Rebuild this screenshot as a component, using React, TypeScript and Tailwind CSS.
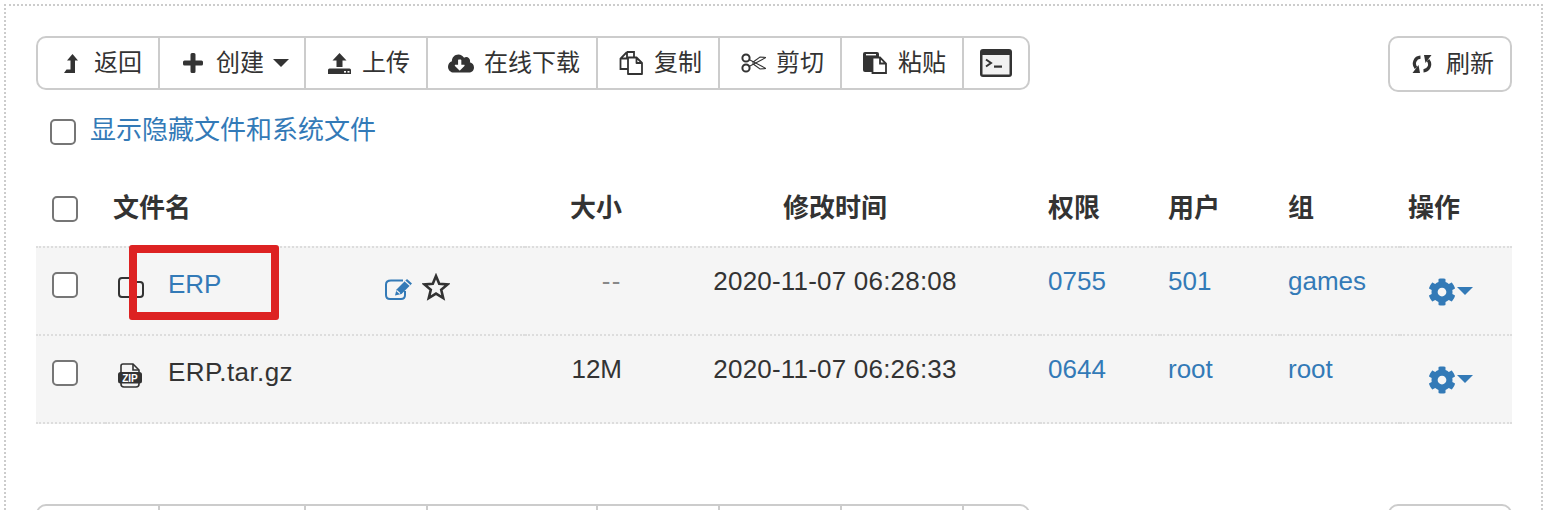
import { FaCloudDownloadAlt, FaCog } from "react-icons/fa";

const Check = ({ className = "" }: { className?: string }) => (
  <input
    type="checkbox"
    readOnly
    className={`block appearance-none w-[26px] h-[26px] shrink-0 rounded-[5px] border-2 border-[#767676] bg-white ${className}`}
  />
);

const Caret = ({ className = "" }: { className?: string }) => (
  <svg width="16" height="8" viewBox="0 0 16 8" className={className}>
    <path d="M0 0H16L8 8Z" fill="currentColor" />
  </svg>
);

const BackIcon = () => (
  <svg width="14" height="19" viewBox="0 0 14 19" fill="#333">
    <path d="M8.5 0L14 6.5H11V19H0L2.5 15.5H6.5V6.5H3Z" />
  </svg>
);

const PlusIcon = () => (
  <svg width="20" height="20" viewBox="0 0 20 20" fill="#333">
    <path d="M7.5 1.5Q7.5 0 9 0H11Q12.5 0 12.5 1.5V7.5H18.5Q20 7.5 20 9V11Q20 12.5 18.5 12.5H12.5V18.5Q12.5 20 11 20H9Q7.5 20 7.5 18.5V12.5H1.5Q0 12.5 0 11V9Q0 7.5 1.5 7.5H7.5Z" />
  </svg>
);

const UploadIcon = () => (
  <svg width="23" height="21" viewBox="0 0 23 21" fill="#333">
    <path d="M11.5 0L18.5 7.5H14.5V14H8.5V7.5H4.5Z" />
    <path d="M0 17Q0 15.5 1.5 15.5H21.5Q23 15.5 23 17V21H0Z" />
    <rect x="16" y="18" width="2" height="1.6" fill="#fff" />
    <rect x="19.5" y="18" width="2" height="1.6" fill="#fff" />
  </svg>
);

const CopyIcon = () => (
  <svg width="24" height="24" viewBox="0 0 24 24" fill="none" stroke="#333" strokeWidth="1.8">
    <path d="M8 1H15V6.5M8 1L1.5 7.5V18H9M8 1V7.5H1.5" />
    <path d="M9 6.5H17.5L23 12V23H9ZM17.5 6.5V12H23" strokeLinejoin="round" />
  </svg>
);

const ScissorsIcon = () => (
  <svg width="25" height="20" viewBox="0 0 25 20" fill="none" stroke="#333">
    <circle cx="5" cy="5" r="3.6" strokeWidth="2" />
    <circle cx="5" cy="15" r="3.6" strokeWidth="2" />
    <path d="M8 6.6L25 15.5L19 16L11.5 10.5" strokeWidth="1.1" />
    <path d="M8 13.4L25 4.5L19 4L11.5 9.5" strokeWidth="1.1" />
  </svg>
);

const PasteIcon = () => (
  <svg width="24" height="22" viewBox="0 0 24 22">
    <path d="M2 0H14Q16 0 16 2V20H2Q0 20 0 18V2Q0 0 2 0Z" fill="#333" />
    <rect x="3" y="2" width="10" height="1.4" fill="#fff" />
    <path d="M9.5 5.5H17L23 11.5V21H9.5Z M17 5.5V11.5H23" fill="#fff" stroke="#333" strokeWidth="1.8" />
  </svg>
);

const TerminalIcon = () => (
  <svg width="32" height="28" viewBox="0 0 32 28">
    <rect x="0" y="0" width="32" height="28" rx="3" fill="#333" />
    <rect x="2.5" y="6" width="27" height="19.5" fill="#f2f2f2" />
    <path d="M6 10.5L11 14L6 17.5" fill="none" stroke="#333" strokeWidth="2" />
    <rect x="14" y="16.5" width="8" height="2.2" fill="#333" />
  </svg>
);

const RefreshArc = () => (
  <>
    <path d="M8.5 2.2C3 2.5 0.5 8.5 4 13" fill="none" stroke="#333" strokeWidth="3.2" />
    <path d="M0.5 18L8 18L6.5 10Z" />
  </>
);

const RefreshIcon = () => (
  <svg width="20" height="18" viewBox="0 0 20 18" fill="#333" className="shrink-0">
    <RefreshArc />
    <g transform="rotate(180 10 9)">
      <RefreshArc />
    </g>
  </svg>
);

const FolderIcon = () => (
  <svg width="26" height="21" viewBox="0 0 26 21" fill="none" stroke="#333" strokeWidth="2">
    <path d="M4 1H12Q15 1 15 4V5H22Q25 5 25 8V17Q25 20 22 20H4Q1 20 1 17V4Q1 1 4 1Z" />
  </svg>
);

const ZipIcon = () => (
  <svg width="24" height="25" viewBox="0 0 24 25">
    <path d="M5 1H15L21 7V21Q21 24 18 24H6Q3 24 3 21V3Q3 1 5 1Z" fill="none" stroke="#333" strokeWidth="1.6" />
    <path d="M15 1V7H21" fill="none" stroke="#333" strokeWidth="1.6" />
    <rect x="0" y="9" width="24" height="11.5" rx="2.5" fill="#333" />
    <text x="12" y="18.6" textAnchor="middle" fontSize="10" fontWeight="700" fill="#fff" fontFamily="Liberation Sans">
      ZIP
    </text>
  </svg>
);

const EditIcon = () => (
  <svg width="28" height="22" viewBox="0 0 28 22" fill="none" stroke="#337ab7" strokeWidth="2">
    <path d="M18 2.5H6Q1 2.5 1 6.5V17Q1 21 5 21H16Q20 21 20 17V13" />
    <path d="M10 17.5L11.5 11.5L22 1L27 5.5L16.5 16Z" fill="#337ab7" stroke="none" />
    <path d="M20 3L25 7.5M11.5 12.5L15 15.5" stroke="#f5f5f5" strokeWidth="1.1" />
  </svg>
);

const StarIcon = () => (
  <svg width="28" height="28" viewBox="0 0 28 28" fill="none" stroke="#333" strokeWidth="2.6">
    <path d="M14 3L17.2 10.8L25.6 11.4L19.2 16.8L21.2 25L14 20.6L6.8 25L8.8 16.8L2.4 11.4L10.8 10.8Z" />
  </svg>
);

const TOOLS = [
  { label: "返回", icon: <BackIcon />, width: "w-[124px]" },
  { label: "创建", icon: <PlusIcon />, width: "w-[148px]", caret: true },
  { label: "上传", icon: <UploadIcon />, width: "w-[124px]" },
  { label: "在线下载", icon: <FaCloudDownloadAlt className="w-[26px] h-[21px]" />, width: "w-[172px]" },
  { label: "复制", icon: <CopyIcon />, width: "w-[124px]" },
  { label: "剪切", icon: <ScissorsIcon />, width: "w-[124px]" },
  { label: "粘贴", icon: <PasteIcon />, width: "w-[124px]" },
];

function Toolbar() {
  return (
    <div className="flex items-start justify-between">
      <div className="flex h-[54px]">
        {TOOLS.map((t, i) => (
          <div
            key={t.label}
            className={`${t.width} flex items-center shrink-0 gap-[10px] pl-[20px] border-2 border-[#ccc] bg-white text-[24px] ${
              i === 0 ? "rounded-l-[10px]" : "-ml-[2px]"
            }`}
          >
            <span className="w-[26px] flex justify-center text-[#333]">{t.icon}</span>
            <span className="pb-[2px]">{t.label}</span>
            {t.caret && <Caret className="-ml-[1px] text-[#333]" />}
          </div>
        ))}
        <div className="w-[68px] -ml-[2px] flex items-center justify-center border-2 border-[#ccc] rounded-r-[10px]">
          <TerminalIcon />
        </div>
      </div>
      <div className="w-[124px] h-[56px] flex items-center gap-[14px] pl-[22px] border-2 border-[#ccc] rounded-[10px] text-[24px]">
        <RefreshIcon />
        <span className="pb-[2px]">刷新</span>
      </div>
    </div>
  );
}

const ROWS = [
  {
    name: "ERP",
    icon: <FolderIcon />,
    iconTop: "mt-[29px]",
    nameClass: "text-[#337ab7]",
    actions: true,
    size: "--",
    sizeClass: "text-[#888] tracking-[1.5px]",
    time: "2020-11-07 06:28:08",
    perm: "0755",
    user: "501",
    group: "games",
  },
  {
    name: "ERP.tar.gz",
    icon: <ZipIcon />,
    iconTop: "mt-[27px]",
    nameClass: "tracking-[0.4px]",
    actions: false,
    size: "12M",
    sizeClass: "",
    time: "2020-11-07 06:26:33",
    perm: "0644",
    user: "root",
    group: "root",
  },
];

const HEAD_CELL = "h-[74px] align-top pt-[18px] font-bold";
const CELL = "h-[88px] align-top pt-[15px] border-t-2 border-dotted border-[#ddd] bg-[#f5f5f5] pl-[8px]";

export default function App() {
  return (
    <div
      className="relative h-[510px] w-[1564px] overflow-hidden bg-white text-[#333] pt-[4px] pl-[4px]"
      style={{ fontFamily: '"Liberation Sans","Noto Sans CJK SC",sans-serif' }}
    >
      <div className="w-[1539px] border-2 border-dotted border-[#ccc] pt-[30px] pl-[30px] pr-[29px] text-[26px] leading-[37px]">
        <Toolbar />

        <div className="flex items-start mt-[20px] pl-[14px] gap-[14px]">
          <Check className="mt-[7px]" />
          <a className="text-[#337ab7]">显示隐藏文件和系统文件</a>
        </div>

        <table className="mt-[23px] w-[1476px] table-fixed border-separate border-spacing-0">
          <colgroup>
            <col className="w-[69px]" />
            <col className="w-[420px]" />
            <col className="w-[105px]" />
            <col className="w-[410px]" />
            <col className="w-[120px]" />
            <col className="w-[120px]" />
            <col className="w-[120px]" />
            <col className="w-[112px]" />
          </colgroup>
          <thead>
            <tr>
              <th className={`${HEAD_CELL} text-left pl-[16px]`}>
                <Check className="mt-[6px]" />
              </th>
              <th className={`${HEAD_CELL} text-left pl-[8px]`}>文件名</th>
              <th className={`${HEAD_CELL} text-right pr-[8px]`}>大小</th>
              <th className={`${HEAD_CELL} text-center`}>修改时间</th>
              <th className={`${HEAD_CELL} text-left pl-[8px]`}>权限</th>
              <th className={`${HEAD_CELL} text-left pl-[8px]`}>用户</th>
              <th className={`${HEAD_CELL} text-left pl-[8px]`}>组</th>
              <th className={`${HEAD_CELL} text-left pl-[8px]`}>操作</th>
            </tr>
          </thead>
          <tbody>
            {ROWS.map((r, i) => {
              const last = i === ROWS.length - 1 ? "border-b-2 h-[90px]" : "";
              return (
                <tr key={r.name}>
                  <td className={`${CELL} ${last} !pl-[16px] !pt-[24px]`}>
                    <Check />
                  </td>
                  <td className={`${CELL} ${last} !pt-0 !pl-[13px]`}>
                    <div className="flex items-start">
                      <span className={`w-[26px] shrink-0 ${r.iconTop}`}>{r.icon}</span>
                      <span className={`w-[217px] shrink-0 ml-[24px] mt-[18px] ${r.nameClass}`}>{r.name}</span>
                      {r.actions && (
                        <>
                          <span className="mt-[30px]">
                            <EditIcon />
                          </span>
                          <span className="mt-[25px] ml-[9px]">
                            <StarIcon />
                          </span>
                        </>
                      )}
                    </div>
                  </td>
                  <td className={`${CELL} ${last} text-right !pl-0 pr-[8px] ${r.sizeClass}`}>{r.size}</td>
                  <td className={`${CELL} ${last} text-center !pl-0 tracking-[0.2px]`}>{r.time}</td>
                  <td className={`${CELL} ${last} text-[#337ab7]`}>{r.perm}</td>
                  <td className={`${CELL} ${last} text-[#337ab7]`}>{r.user}</td>
                  <td className={`${CELL} ${last} text-[#337ab7]`}>{r.group}</td>
                  <td className={`${CELL} ${last} !pt-[30px] !pl-[28px]`}>
                    <div className="flex items-start text-[#337ab7]">
                      <FaCog className="w-[28px] h-[28px]" />
                      <Caret className="mt-[9px] ml-[1px]" />
                    </div>
                  </td>
                </tr>
              );
            })}
          </tbody>
        </table>

        <div className="mt-[80px]">
          <Toolbar />
        </div>
      </div>

      {/* annotation drawn over the screenshot */}
      <div className="absolute left-[129px] top-[245px] w-[150px] h-[75px] border-[8px] border-[#dd2222] rounded-[3px]" />
    </div>
  );
}
